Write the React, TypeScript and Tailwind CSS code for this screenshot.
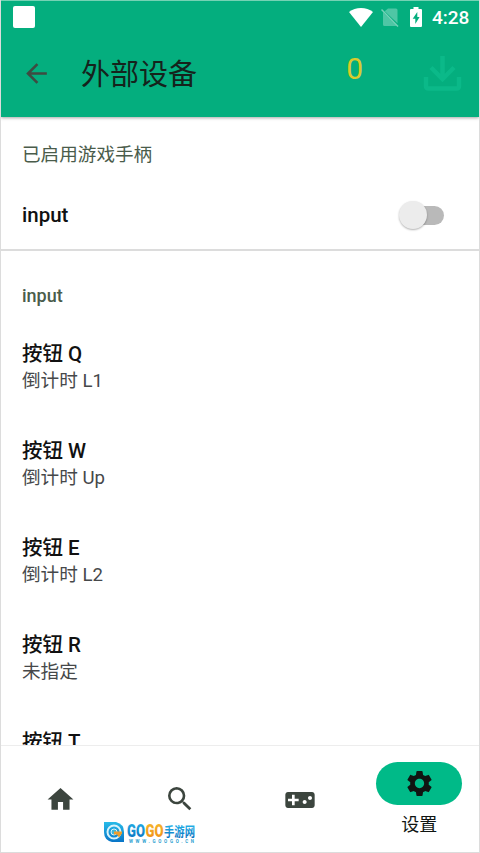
import React from 'react';
import { MdArrowBack, MdHome, MdSearch, MdSettings, MdVideogameAsset } from 'react-icons/md';

interface Mapping {
  button: string;
  action: string;
}

const mappings: Mapping[] = [
  { button: '按钮 Q', action: '倒计时 L1' },
  { button: '按钮 W', action: '倒计时 Up' },
  { button: '按钮 E', action: '倒计时 L2' },
  { button: '按钮 R', action: '未指定' },
  { button: '按钮 T', action: '未指定' },
];

const StatusBar: React.FC = () => (
  <div className="flex h-8 items-center pl-3 pr-[11px] text-white">
    <div className="h-[22px] w-[22px] rounded-[2px] bg-white" />
    <svg className="ml-auto h-[19px] w-6" viewBox="0 0 24 19" fill="currentColor">
      <path d="M12 19 0 4C3.400 1.300 7.500 0 12 0s8.600 1.300 12 4z" />
    </svg>
    <svg className="ml-2 mt-px h-[19px] w-[18px]" viewBox="0 0 18 19" fill="currentColor">
      <path d="M7 .5h8q1.500 0 1.500 1.500v13.200L3.700 3.300zM2 4.300 15.500 18H3.500Q2 18 2 16.500z" opacity=".3" />
      <path d="M.5 1.500 17 18.500" stroke="currentColor" strokeWidth="1.500" opacity=".45" />
    </svg>
    <svg className="ml-[11px] h-5 w-3" viewBox="0 0 12 20" fill="currentColor" fillRule="evenodd">
      <path d="M3.500 0h5v2H11q1 0 1 1v16q0 1-1 1H1q-1 0-1-1V3q0-1 1-1h2.500zM7.300 5 2.700 11.700h2.600V17l4.300-7H7.300z" />
    </svg>
    <span className="ml-[10px] w-9 text-[19px] font-medium leading-none">4:28</span>
  </div>
);

const Header: React.FC = () => (
  <header className="relative z-10 h-[117px] shrink-0 border-t border-[#75d2b4] bg-[#04ae7e] shadow-[0_1px_3px_rgba(0,0,0,0.35)]">
    <StatusBar />
    <div className="flex h-[84px] items-start pl-5 pr-[17px]">
      <MdArrowBack className="mt-[25px] h-[31px] w-[31px] text-[#3e4b41]" />
      <h1 className="ml-[29px] mt-[21px] text-[29px] leading-[42px] text-[#15231c]">外部设备</h1>
      <span className="ml-auto mt-[18px] text-[30px] leading-[36px] text-[#d8cb2c]">0</span>
      <svg
        className="ml-[60px] mt-[23px] h-[36px] w-[39px]"
        viewBox="0 0 39 36"
        fill="none"
        stroke="#0bb989"
        strokeWidth="4.500"
      >
        <path d="M19.500 0v22M8 11.500 19.500 23 31 11.500" />
        <path d="M3 21v9q0 2.500 2.500 2.500h28q2.500 0 2.500-2.500v-9" />
      </svg>
    </div>
  </header>
);

const Toggle: React.FC = () => (
  <div className="flex h-[19px] w-[44px] items-center rounded-full bg-[#b9b9b9]">
    <span className="-ml-px h-[28px] w-[28px] shrink-0 rounded-full bg-[#ececec] shadow-[0_1px_2px_rgba(0,0,0,0.3)]" />
  </div>
);

const GogoMark: React.FC = () => (
  <div className="absolute left-[102px] top-[821px] flex items-start">
    <svg className="h-[22px] w-[22px]" viewBox="0 0 22 22" fill="none">
      <defs>
        <linearGradient id="mark" x1="0" y1="0" x2="0" y2="1">
          <stop offset="0" stopColor="#27bbe8" />
          <stop offset="1" stopColor="#0874c7" />
        </linearGradient>
      </defs>
      <path d="M1 1h12q8 2 8 10v10H9Q1 19 1 11z" fill="url(#mark)" />
      <circle cx="11" cy="11" r="6.500" stroke="#d9f3fa" strokeWidth="2" />
      <circle cx="11" cy="11" r="3" fill="#40b8d8" stroke="#d9f3fa" />
      <path d="M11 10.500h8v2l-3 4-2-3h-3z" fill="#ed9d2c" />
    </svg>
    <div className="ml-[2px] pt-[2px]">
      <div className="flex h-[15px] items-center font-bold leading-none">
        <svg className="h-[15px] w-[69px]" viewBox="0 0 69 15">
          <defs>
            <linearGradient id="blue" x1="0" y1="0" x2="0" y2="1">
              <stop offset="0" stopColor="#24b6ea" />
              <stop offset="1" stopColor="#086dbd" />
            </linearGradient>
            <linearGradient id="gold" x1="0" y1="0" x2="0" y2="1">
              <stop offset="0" stopColor="#f7bd2f" />
              <stop offset="1" stopColor="#ef8a16" />
            </linearGradient>
          </defs>
          <text x="0" y="14" fontSize="18" fontWeight="900" fill="url(#blue)" textLength="18" lengthAdjust="spacingAndGlyphs">GO</text>
          <text x="18.500" y="14" fontSize="18" fontWeight="900" fill="url(#gold)" textLength="18" lengthAdjust="spacingAndGlyphs">GO</text>
          <text x="37" y="13" fontSize="13" fontWeight="700" fill="url(#blue)" textLength="31" lengthAdjust="spacingAndGlyphs">手游网</text>
        </svg>
      </div>
      <svg className="h-[5px] w-[69px]" viewBox="0 0 69 5">
        <text x="2" y="4.500" fontSize="4.500" fontWeight="700" fill="#2d9fd0" textLength="65">WWW.GOOGO.CN</text>
      </svg>
    </div>
  </div>
);

const BottomNav: React.FC = () => (
  <nav className="grid h-[107px] shrink-0 grid-cols-4 border-t border-[#ededed] bg-white text-[#3c453e]">
    <div className="flex justify-center pt-[38px]">
      <MdHome className="h-[31px] w-[31px]" />
    </div>
    <div className="flex justify-center pt-[37px]">
      <MdSearch className="h-[32px] w-[32px]" />
    </div>
    <div className="flex justify-center pt-[38px]">
      <MdVideogameAsset className="h-[32px] w-[32px]" />
    </div>
    <div className="flex flex-col items-center pt-4 text-[#101512]">
      <div className="flex h-[43px] w-[86px] items-center justify-center rounded-full bg-[#00ba88]">
        <MdSettings className="h-[31px] w-[31px]" />
      </div>
      <span className="mt-[6px] text-[18px] leading-[27px]">设置</span>
    </div>
  </nav>
);

export default function App() {
  return (
    <div className="relative flex h-[853px] w-[480px] flex-col overflow-hidden border-x border-b border-[#dcdcdc] bg-white font-[Roboto,'Noto_Sans_CJK_SC',sans-serif]">
      <Header />

      <main className="min-h-0 flex-1 overflow-hidden">
        <section className="h-[134px] border-b-2 border-[#dcdcdc] px-[21px] pt-[25px]">
          <h2 className="text-[18.600px] leading-[27px] text-[#4a5c4b]">已启用游戏手柄</h2>
          <div className="mt-[31px] flex items-center justify-between pr-[14px]">
            <span className="text-[20.500px] font-medium leading-[30px] text-[#111]">input</span>
            <Toggle />
          </div>
        </section>

        <section className="px-[21px] pt-[31px]">
          <h2 className="text-[18px] font-medium leading-[27px] text-[#4a5c4b]">input</h2>
          <ul className="mt-[31px]">
            {mappings.map((m) => (
              <li key={m.button} className="h-[97px]">
                <div className="text-[20.500px] font-medium leading-[28px] text-[#111]">{m.button}</div>
                <div className="text-[18.600px] leading-[27px] text-[#46484a]">{m.action}</div>
              </li>
            ))}
          </ul>
        </section>
      </main>

      <BottomNav />
      <GogoMark />
    </div>
  );
}
